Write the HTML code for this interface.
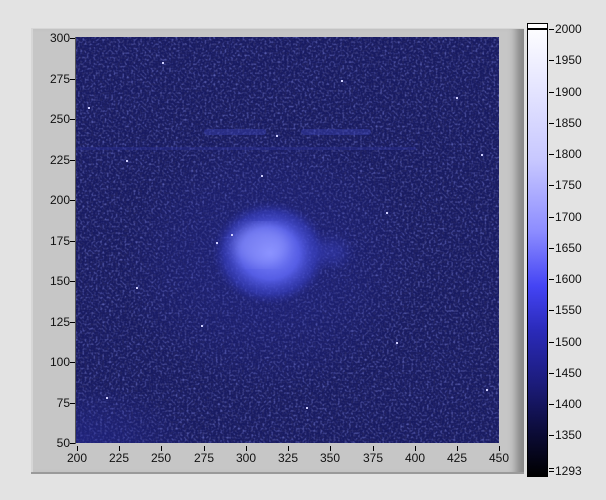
<!DOCTYPE html>
<html><head><style>
body{margin:0;width:606px;height:500px;background:#e3e3e3;position:relative;overflow:hidden;font-family:"Liberation Sans",sans-serif;font-size:12px;color:#111}
.panel{position:absolute;left:31px;top:28px;width:491px;height:443px;background:#c6c6c6;border-left:2px solid #d6d6d6;border-top:1px solid #d6d6d6;box-shadow:inset -14px 0 8px -6px #888, 0 2px 0 #9a9a9a}
.lab{position:absolute;font-size:12px;line-height:12px}
.yl{text-align:right;width:30px;left:40px}
.xl{top:452px;width:30px;text-align:center}
.tk{position:absolute;background:#000}
.cb{position:absolute;left:527px;top:23px;width:19px;height:452px;border:1px solid #000;background:linear-gradient(to bottom,#fff 0%,#f4f4ff 6%,#c8c8ff 30%,#8c8cff 46%,#4444f4 58%,#2a2ab8 68%,#1b1b78 80%,#0c0c3a 90%,#000 100%)}
</style></head><body>
<div class="panel"></div>
<svg style="position:absolute;left:76px;top:37px" width="423" height="406">
<defs>
<filter id="n1" x="0" y="0" width="100%" height="100%"><feTurbulence type="fractalNoise" baseFrequency="0.45" numOctaves="1" seed="3"/><feColorMatrix values="0 0 0 0 0.18  0 0 0 0 0.2  0 0 0 0 0.65  2 0 0 0 -0.95"/></filter>
<filter id="n2" x="0" y="0" width="100%" height="100%"><feTurbulence type="fractalNoise" baseFrequency="0.45" numOctaves="1" seed="9"/><feColorMatrix values="0 0 0 0 0.02  0 0 0 0 0.02  0 0 0 0 0.12  2.2 0 0 0 -0.95"/></filter>
<filter id="bl"><feGaussianBlur stdDeviation="6"/></filter>
<radialGradient id="b" cx="0.5" cy="0.5" r="0.5"><stop offset="0" stop-color="#8088ff"/><stop offset="0.5" stop-color="#5860ea" stop-opacity="0.95"/><stop offset="0.8" stop-color="#3a42c8" stop-opacity="0.55"/><stop offset="1" stop-color="#2a2e9a" stop-opacity="0"/></radialGradient>
<radialGradient id="g" cx="0.5" cy="0.5" r="0.5"><stop offset="0" stop-color="#262a94" stop-opacity="0.5"/><stop offset="1" stop-color="#2a2e9a" stop-opacity="0"/></radialGradient>
</defs>
<rect width="423" height="406" fill="#181b62"/>
<rect width="423" height="406" filter="url(#n1)"/>
<rect width="423" height="406" filter="url(#n2)"/>
<ellipse cx="195" cy="225" rx="150" ry="130" fill="url(#g)"/>
<ellipse cx="0" cy="406" rx="120" ry="60" fill="url(#g)"/>
<ellipse cx="194" cy="216" rx="58" ry="52" fill="url(#b)"/>
<g filter="url(#bl)" opacity="0.45"><ellipse cx="185" cy="208" rx="28" ry="20" fill="#9aa0ff"/><ellipse cx="255" cy="215" rx="16" ry="12" fill="#3c44c8"/></g>
<rect x="128" y="92" width="62" height="6" rx="3" fill="#3a40b0" opacity="0.45"/>
<rect x="225" y="92" width="70" height="6" rx="3" fill="#3a40b0" opacity="0.45"/>
<rect x="0" y="110" width="340" height="3" fill="#2e3398" opacity="0.4"/>
<g fill="#d0d0ff">
<rect x="86" y="25" width="2" height="2"/><rect x="265" y="43" width="2" height="2"/><rect x="50" y="123" width="2" height="2"/><rect x="405" y="117" width="2" height="2"/><rect x="140" y="205" width="2" height="2"/><rect x="125" y="288" width="2" height="2"/><rect x="320" y="305" width="2" height="2"/><rect x="410" y="352" width="2" height="2"/><rect x="30" y="360" width="2" height="2"/><rect x="380" y="60" width="2" height="2"/><rect x="200" y="98" width="2" height="2"/><rect x="310" y="175" width="2" height="2"/><rect x="60" y="250" width="2" height="2"/><rect x="230" y="370" width="2" height="2"/><rect x="12" y="70" width="2" height="2"/><rect x="155" y="197" width="2" height="2"/><rect x="185" y="138" width="2" height="2"/>
</g>
</svg>
<div style="position:absolute;left:75px;top:37px;width:1px;height:407px;background:#555"></div>
<div class="tk" style="left:70px;top:38px;width:5px;height:1px"></div><div class="lab yl" style="top:32px">300</div>
<div class="tk" style="left:70px;top:79px;width:5px;height:1px"></div><div class="lab yl" style="top:73px">275</div>
<div class="tk" style="left:70px;top:119px;width:5px;height:1px"></div><div class="lab yl" style="top:113px">250</div>
<div class="tk" style="left:70px;top:160px;width:5px;height:1px"></div><div class="lab yl" style="top:154px">225</div>
<div class="tk" style="left:70px;top:200px;width:5px;height:1px"></div><div class="lab yl" style="top:194px">200</div>
<div class="tk" style="left:70px;top:241px;width:5px;height:1px"></div><div class="lab yl" style="top:235px">175</div>
<div class="tk" style="left:70px;top:281px;width:5px;height:1px"></div><div class="lab yl" style="top:275px">150</div>
<div class="tk" style="left:70px;top:322px;width:5px;height:1px"></div><div class="lab yl" style="top:316px">125</div>
<div class="tk" style="left:70px;top:362px;width:5px;height:1px"></div><div class="lab yl" style="top:356px">100</div>
<div class="tk" style="left:70px;top:403px;width:5px;height:1px"></div><div class="lab yl" style="top:397px">75</div>
<div class="tk" style="left:70px;top:443px;width:5px;height:1px"></div><div class="lab yl" style="top:437px">50</div>
<div class="tk" style="left:77px;top:446px;width:1px;height:5px"></div><div class="lab xl" style="left:62px">200</div>
<div class="tk" style="left:119px;top:446px;width:1px;height:5px"></div><div class="lab xl" style="left:104px">225</div>
<div class="tk" style="left:161px;top:446px;width:1px;height:5px"></div><div class="lab xl" style="left:146px">250</div>
<div class="tk" style="left:204px;top:446px;width:1px;height:5px"></div><div class="lab xl" style="left:189px">275</div>
<div class="tk" style="left:246px;top:446px;width:1px;height:5px"></div><div class="lab xl" style="left:231px">300</div>
<div class="tk" style="left:288px;top:446px;width:1px;height:5px"></div><div class="lab xl" style="left:273px">325</div>
<div class="tk" style="left:330px;top:446px;width:1px;height:5px"></div><div class="lab xl" style="left:315px">350</div>
<div class="tk" style="left:373px;top:446px;width:1px;height:5px"></div><div class="lab xl" style="left:358px">375</div>
<div class="tk" style="left:415px;top:446px;width:1px;height:5px"></div><div class="lab xl" style="left:400px">400</div>
<div class="tk" style="left:457px;top:446px;width:1px;height:5px"></div><div class="lab xl" style="left:442px">425</div>
<div class="tk" style="left:499px;top:446px;width:1px;height:5px"></div><div class="lab xl" style="left:484px">450</div>
<div class="cb"><div style="position:absolute;left:0;right:0;top:4px;height:2px;background:#000"></div></div>
<div style="position:absolute;left:549px;top:0;width:60px">
<div class="tk" style="left:0;top:29px;width:5px;height:1px"></div><div class="lab" style="left:6px;top:23px">2000</div>
<div class="tk" style="left:0;top:60px;width:5px;height:1px"></div><div class="lab" style="left:6px;top:54px">1950</div>
<div class="tk" style="left:0;top:92px;width:5px;height:1px"></div><div class="lab" style="left:6px;top:86px">1900</div>
<div class="tk" style="left:0;top:123px;width:5px;height:1px"></div><div class="lab" style="left:6px;top:117px">1850</div>
<div class="tk" style="left:0;top:154px;width:5px;height:1px"></div><div class="lab" style="left:6px;top:148px">1800</div>
<div class="tk" style="left:0;top:185px;width:5px;height:1px"></div><div class="lab" style="left:6px;top:179px">1750</div>
<div class="tk" style="left:0;top:217px;width:5px;height:1px"></div><div class="lab" style="left:6px;top:211px">1700</div>
<div class="tk" style="left:0;top:248px;width:5px;height:1px"></div><div class="lab" style="left:6px;top:242px">1650</div>
<div class="tk" style="left:0;top:279px;width:5px;height:1px"></div><div class="lab" style="left:6px;top:273px">1600</div>
<div class="tk" style="left:0;top:310px;width:5px;height:1px"></div><div class="lab" style="left:6px;top:304px">1550</div>
<div class="tk" style="left:0;top:342px;width:5px;height:1px"></div><div class="lab" style="left:6px;top:336px">1500</div>
<div class="tk" style="left:0;top:373px;width:5px;height:1px"></div><div class="lab" style="left:6px;top:367px">1450</div>
<div class="tk" style="left:0;top:404px;width:5px;height:1px"></div><div class="lab" style="left:6px;top:398px">1400</div>
<div class="tk" style="left:0;top:435px;width:5px;height:1px"></div><div class="lab" style="left:6px;top:429px">1350</div>
<div class="tk" style="left:0;top:468px;width:5px;height:1px"></div><div class="tk" style="left:0;top:471px;width:5px;height:1px"></div><div class="lab" style="left:6px;top:465px">1293</div>
</div>
</body></html>
